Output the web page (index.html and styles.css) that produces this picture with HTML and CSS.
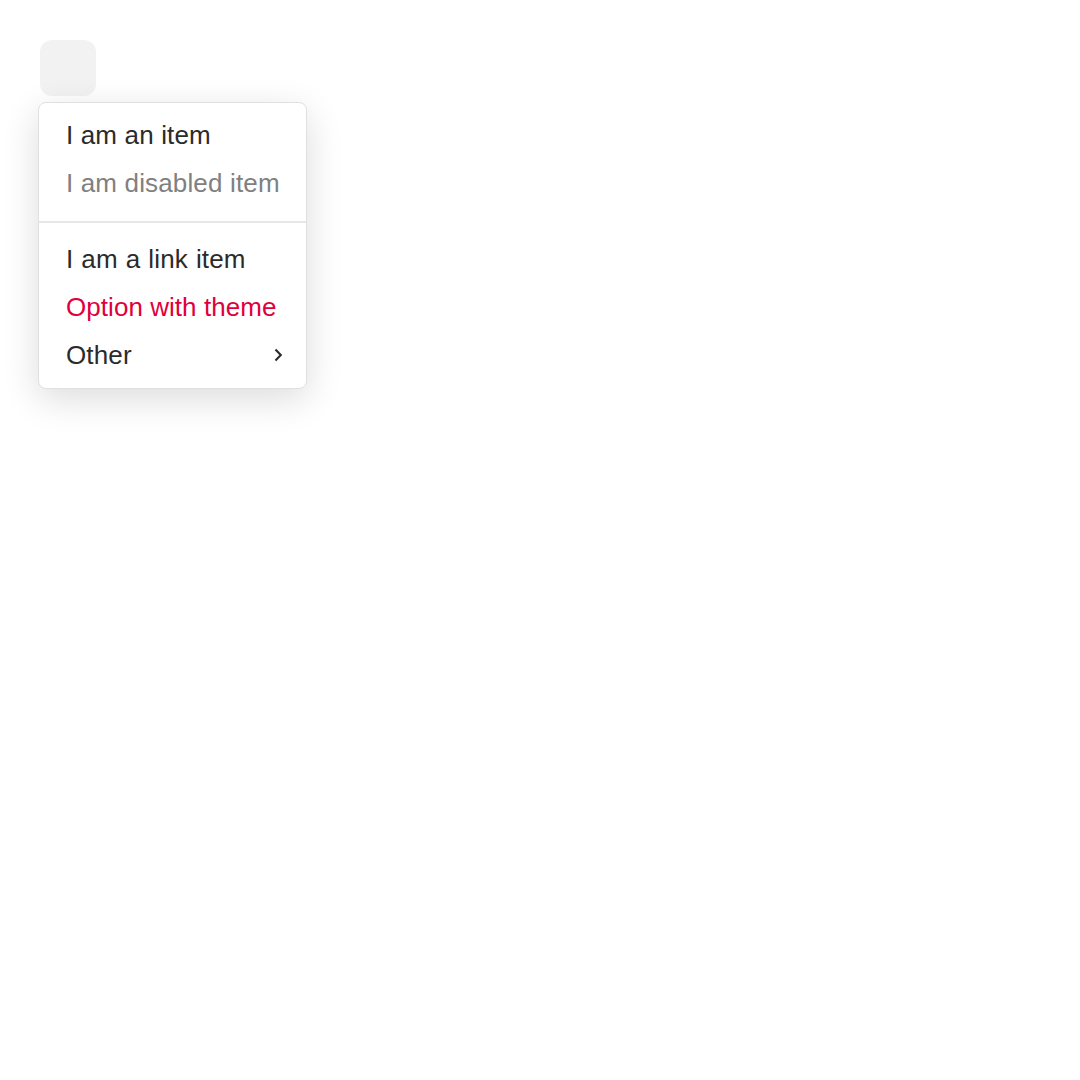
FILE: index.html
```html
<!DOCTYPE html>
<html>
<head>
<meta charset="utf-8">
<link rel="stylesheet" href="styles.css">
</head>
<body>
<div class="wrap">
  <button class="trigger" aria-label="Open menu"></button>
  <div class="menu">
    <div class="section first">
      <div class="item">I am an item</div>
      <div class="item disabled">I am disabled item</div>
    </div>
    <div class="divider"></div>
    <div class="section last">
      <a class="item link">I am a link item</a>
      <div class="item theme">Option with theme</div>
      <div class="item sub">
        <span>Other</span>
        <svg class="chev" width="10" height="16" viewBox="0 0 10 16"><path d="M2.5 2.5 L7.8 8 L2.5 13.5" fill="none" stroke="#2b2b2b" stroke-width="2.1"/></svg>
      </div>
    </div>
  </div>
</div>
</body>
</html>
```
FILE: styles.css
```css
html, body {
  margin: 0;
  padding: 0;
  background: #ffffff;
}
body {
  font-family: "Liberation Sans", Arial, sans-serif;
  min-height: 100vh;
}
.wrap {
  padding: 40px 0 80px 38px;
  display: flex;
  flex-direction: column;
  align-items: flex-start;
}
.trigger {
  width: 56px;
  height: 56px;
  margin-left: 2px;
  border: none;
  border-radius: 12px;
  background: #f2f2f2;
  padding: 0;
}
.menu {
  margin-top: 6px;
  width: 269px;
  box-sizing: border-box;
  border: 1px solid #e0e0e0;
  border-radius: 8px;
  background: #fff;
  box-shadow: 0 10px 36px rgba(0, 0, 0, 0.14);
}
.section.first {
  padding-top: 8px;
}
.section.last {
  padding-bottom: 9px;
}
.divider {
  height: 2px;
  background: #e6e6e6;
  margin: 14px 0 12px;
}
.item {
  display: flex;
  align-items: center;
  justify-content: space-between;
  height: 48px;
  padding: 0 23px 0 27px;
  font-size: 26px;
  letter-spacing: 0.15px;
  color: #2b2b2b;
  text-decoration: none;
  white-space: nowrap;
}
.item.link {
  word-spacing: 0.6px;
}
.item.disabled {
  color: #808080;
}
.item.theme {
  color: #e0003c;
  letter-spacing: 0.05px;
}
.chev {
  display: block;
}
```
